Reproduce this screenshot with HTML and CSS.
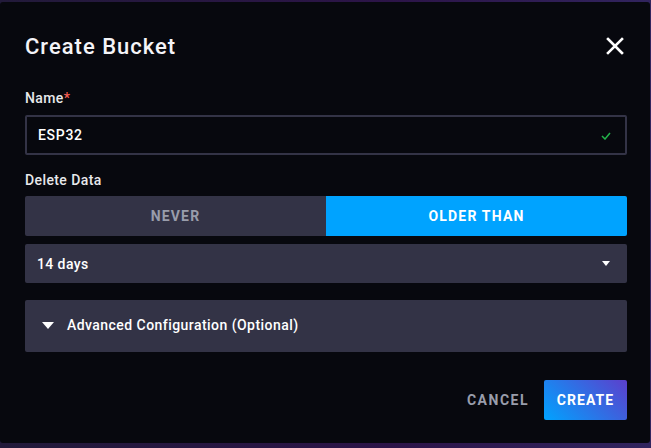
FILE: index.html
```html
<!DOCTYPE html>
<html>
  <head>
    <title>Create Bucket</title>
    <link rel="stylesheet" href="styles.css">
  </head>
  <body>
    <div class="backdrop">
      <div class="dialog">
        <div class="dialog-header">
          <h2 class="dialog-title">Create Bucket</h2>
          <button class="close-btn" aria-label="Close">
            <svg width="18" height="18" viewBox="0 0 18 18">
              <path d="M2 2 L16 16 M16 2 L2 16" stroke="#ffffff" stroke-width="2.6" stroke-linecap="square"/>
            </svg>
          </button>
        </div>

        <div class="dialog-body">
          <label class="field-label name-label" for="name">Name<span class="required">*</span></label>
          <div class="input-wrap">
            <input type="text" id="name" value="ESP32">
            <svg class="check" width="10" height="8" viewBox="0 0 10 8">
              <path d="M1 4 L4 7 L9 1" stroke="#22b34a" stroke-width="1.5" fill="none"/>
            </svg>
          </div>

          <div class="field-label">Delete Data</div>
          <div class="toggle">
            <div class="toggle-opt">NEVER</div>
            <div class="toggle-opt active">OLDER THAN</div>
          </div>

          <div class="dropdown">
            <span>14 days</span>
            <span class="caret"></span>
          </div>

          <div class="advanced">
            <span class="adv-caret"></span>
            <span>Advanced Configuration (Optional)</span>
          </div>
        </div>

        <div class="dialog-footer">
          <button class="btn-cancel">CANCEL</button>
          <button class="btn-create">CREATE</button>
        </div>
      </div>
    </div>
  </body>
</html>
```

FILE: styles.css
```css
/* base */
html, body {
  margin: 0;
  padding: 0;
  height: 100%;
}

body {
  font-family: Roboto, "Liberation Sans", sans-serif;
  background: linear-gradient(90deg, #221a3a 0%, #2c1448 60%, #31245e 100%);
  overflow: hidden;
}

.backdrop {
  height: 100%;
  padding: 2px 0 5px 0;
  box-sizing: border-box;
}

/* dialog */
.dialog {
  background-color: #07080e;
  border-radius: 3px;
  height: 100%;
  width: 650px;
  padding: 0 23px 0 25px;
  box-sizing: border-box;
  color: #f4f4f8;
}

.dialog-header {
  display: flex;
  align-items: center;
  justify-content: space-between;
  height: 88px;
}

.dialog-title {
  margin: 0;
  font-size: 22px;
  font-weight: 500;
  color: #f4f4f8;
  letter-spacing: 1px;
}

.close-btn {
  background: none;
  border: none;
  padding: 0;
  margin-right: 3px;
  cursor: pointer;
  display: flex;
}

.field-label {
  display: block;
  font-size: 14px;
  font-weight: 500;
  color: #e7e8eb;
  height: 24px;
  line-height: 16px;
  letter-spacing: 0.4px;
}

.name-label {
  height: 25px;
}

.required {
  color: #f95f53;
}

.input-wrap {
  position: relative;
  margin-bottom: 17px;
}

.input-wrap input {
  display: block;
  width: 100%;
  height: 40px;
  box-sizing: border-box;
  background: #07080e;
  border: 2px solid #333346;
  border-radius: 2px;
  color: #ffffff;
  font-family: inherit;
  font-size: 14px;
  font-weight: 500;
  letter-spacing: 0.7px;
  padding: 0 0 0 11px;
  outline: none;
}

.input-wrap .check {
  position: absolute;
  right: 16px;
  top: 17px;
}

/* toggle */
.toggle {
  display: flex;
  height: 40px;
  border-radius: 2px;
  overflow: hidden;
  margin-bottom: 8px;
}

.toggle-opt {
  flex: 1;
  display: flex;
  align-items: center;
  justify-content: center;
  background-color: #333346;
  color: #999dab;
  font-size: 14px;
  font-weight: 700;
  letter-spacing: 1.2px;
}

.toggle-opt.active {
  background-color: #00a3ff;
  color: #ffffff;
}

/* dropdown */
.dropdown {
  display: flex;
  align-items: center;
  justify-content: space-between;
  height: 39px;
  padding: 0 17px 0 12px;
  background-color: #333346;
  border-radius: 2px;
  font-size: 14px;
  font-weight: 500;
  letter-spacing: 0.4px;
  color: #ffffff;
  margin-bottom: 17px;
}

.caret {
  width: 0;
  height: 0;
  border-left: 4px solid transparent;
  border-right: 4px solid transparent;
  border-top: 5px solid #ffffff;
}

.advanced {
  display: flex;
  align-items: center;
  height: 52px;
  padding: 0 0 2px 17px;
  box-sizing: border-box;
  background-color: #333346;
  border-radius: 2px;
  font-size: 14px;
  font-weight: 500;
  letter-spacing: 0.45px;
  color: #ffffff;
}

.adv-caret {
  width: 0;
  height: 0;
  border-left: 6px solid transparent;
  border-right: 6px solid transparent;
  border-top: 7px solid #ffffff;
  margin-right: 13px;
}

/* footer */
.dialog-footer {
  display: flex;
  justify-content: flex-end;
  align-items: center;
  gap: 7px;
  margin-top: 28px;
}

.btn-cancel {
  background: none;
  border: none;
  color: #999dab;
  font-family: inherit;
  font-size: 14px;
  font-weight: 700;
  letter-spacing: 1.5px;
  height: 40px;
  padding: 0 8px;
  cursor: pointer;
}

.btn-create {
  background: linear-gradient(45deg, #00a3ff 0%, #5c3fcc 100%);
  border: none;
  border-radius: 2px;
  color: #ffffff;
  font-family: inherit;
  font-size: 14px;
  font-weight: 700;
  letter-spacing: 1.1px;
  height: 40px;
  width: 83px;
  padding: 0;
  cursor: pointer;
}
```
